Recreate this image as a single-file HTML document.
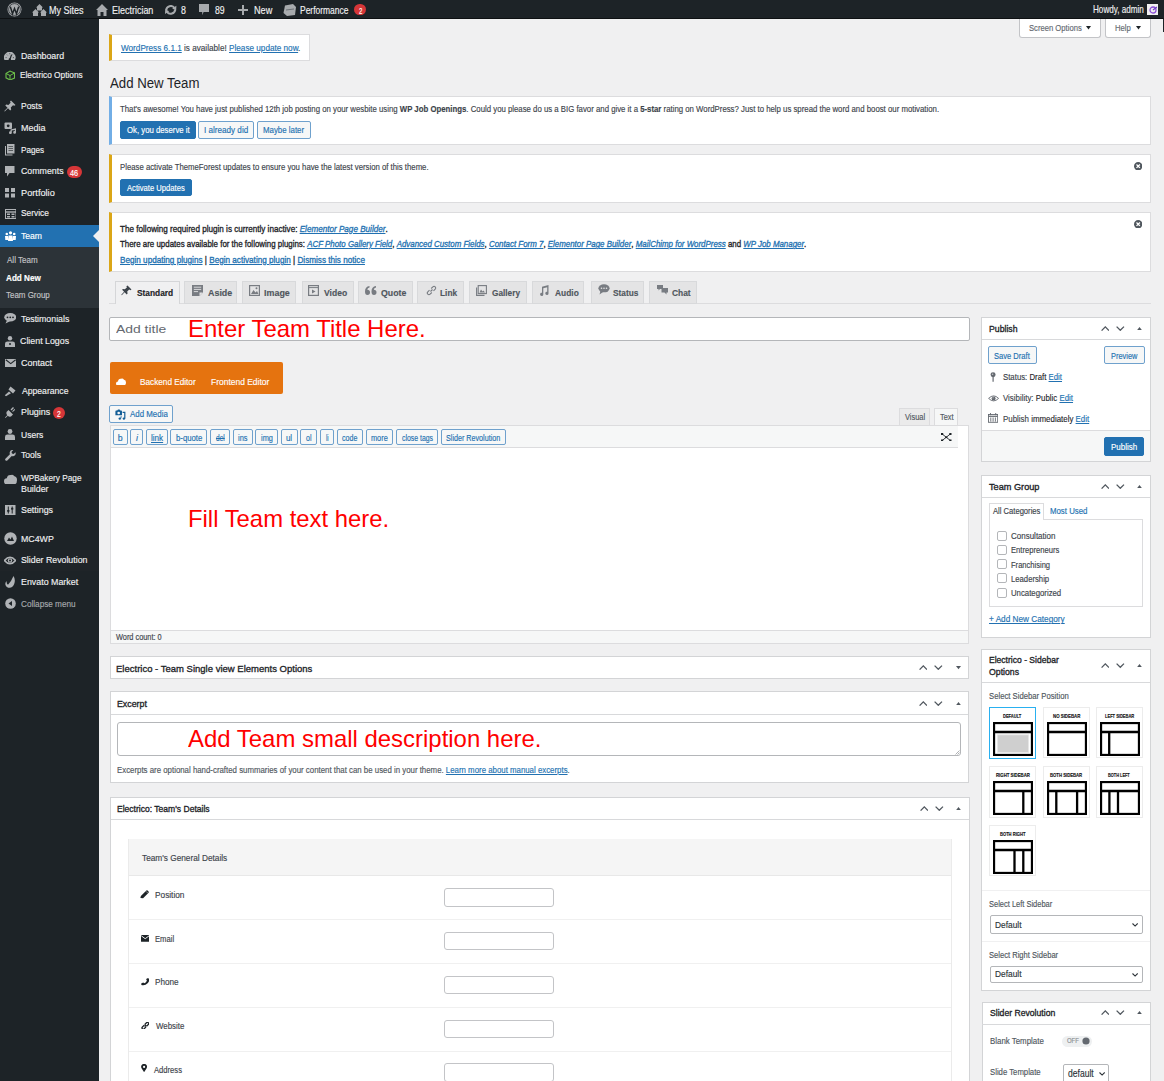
<!DOCTYPE html>
<html><head><meta charset="utf-8"><title>Add New Team</title>
<style>
html,body{margin:0;padding:0;}
body{width:1164px;height:1081px;overflow:hidden;position:relative;background:#f0f0f1;font-family:"Liberation Sans",sans-serif;}
.a{position:absolute;box-sizing:border-box;}
.t{position:absolute;white-space:nowrap;line-height:1;transform-origin:0 0;-webkit-text-stroke:0.15px currentColor;}
.t a,.u{color:#2271b1;text-decoration:underline;}
</style></head><body>
<div class="a" style="left:0px;top:0px;width:1164.00px;height:19.00px;background:#1d2327;"></div>
<div class="a" style="left:0px;top:18.3px;width:1164.00px;height:0.70px;background:#000;opacity:.5;"></div>
<svg class="a" style="left:7.1px;top:1.7px;" width="15" height="15" viewBox="0 0 15 15"><circle cx="7.5" cy="7.5" r="7" fill="#a7aaad"/><circle cx="7.5" cy="7.5" r="5.9" fill="none" stroke="#1d2327" stroke-width="0.7"/><path d="M3.3 4.6 L5.5 11.8 L7.5 6.6 L9.5 11.8 L11.7 4.6" fill="none" stroke="#1d2327" stroke-width="1.5"/></svg>
<svg class="a" style="left:32px;top:3.5px;" width="15" height="12" viewBox="0 0 15 12"><path d="M7.5 0 L11 3.5 L4 3.5 Z M5 3.5 h5 v3 h-5z" fill="#a7aaad"/><path d="M3.5 5 L7 8.5 L0 8.5Z M1 8.5h5v3.5h-5z M11.5 5 L15 8.5 L8 8.5Z M9 8.5h5v3.5h-5z" fill="#a7aaad"/></svg>
<div class="t" id="t0" style="left:49.24px;top:4.89px;font-size:10.64px;color:#f0f0f1;transform:scaleX(0.8500);">My Sites</div>
<svg class="a" style="left:96px;top:3.5px;" width="12" height="12" viewBox="0 0 12 12"><path d="M6 0 L12 6 L10.5 6 L10.5 12 L7.5 12 L7.5 8 L4.5 8 L4.5 12 L1.5 12 L1.5 6 L0 6 Z" fill="#a7aaad"/></svg>
<div class="t" id="t1" style="left:111.63px;top:4.89px;font-size:10.64px;color:#f0f0f1;transform:scaleX(0.8438);">Electrician</div>
<svg class="a" style="left:164.2px;top:4.8px;" width="13.4" height="9.8" viewBox="0 0 13.4 9.8"><path d="M2.2 5.2A4.6 4.6 0 0 1 10.4 2.8" fill="none" stroke="#a7aaad" stroke-width="2"/><path d="M8.2 3.6L12.4 0.8L12.2 5.6Z" fill="#a7aaad"/><path d="M11.2 4.6A4.6 4.6 0 0 1 3 7" fill="none" stroke="#a7aaad" stroke-width="2"/><path d="M5.2 6.2L1 9L1.2 4.2Z" fill="#a7aaad"/></svg>
<div class="t" id="t2" style="left:181.00px;top:4.89px;font-size:10.64px;color:#f0f0f1;transform:scaleX(0.8333);">8</div>
<svg class="a" style="left:198.6px;top:3.8px;" width="10.6" height="11.2" viewBox="0 0 10.6 11.2"><path d="M0 0H10.6V8H4.6L3.2 11.2V8H0Z" fill="#a7aaad"/></svg>
<div class="t" id="t3" style="left:215.47px;top:4.89px;font-size:10.64px;color:#f0f0f1;transform:scaleX(0.8167);">89</div>
<svg class="a" style="left:238px;top:4.5px;" width="10" height="10" viewBox="0 0 10 10"><path d="M4 0h2v4h4v2h-4v4h-2v-4h-4v-2h4z" fill="#a7aaad"/></svg>
<div class="t" id="t4" style="left:253.61px;top:4.89px;font-size:10.64px;color:#f0f0f1;transform:scaleX(0.8571);">New</div>
<svg class="a" style="left:283px;top:3.5px;" width="13" height="12" viewBox="0 0 13 12"><path d="M2 1.5 L10 0 L13 3 L12 11 L4 12 L0.5 9 Z" fill="#a7aaad"/><path d="M3 6 L11 5" stroke="#6b7075" stroke-width="1"/></svg>
<div class="t" id="t5" style="left:300.15px;top:4.89px;font-size:10.64px;color:#f0f0f1;transform:scaleX(0.7968);">Performance</div>
<div class="a" style="left:354px;top:4.3px;width:12.00px;height:10.30px;background:#d63638;border-radius:6px;"></div>
<div class="t" id="t6" style="left:359.16px;top:5.64px;font-size:9.52px;color:#fff;transform:scaleX(0.6286);">2</div>
<div class="t" id="t7" style="left:1093.36px;top:5.37px;font-size:10.08px;color:#f0f0f1;transform:scaleX(0.8065);">Howdy, admin</div>
<div class="a" style="left:1147px;top:4.2px;width:11.00px;height:10.80px;background:#f0f0f1;"></div>
<svg class="a" style="left:1148.5px;top:5.5px;" width="8" height="8" viewBox="0 0 8 8"><circle cx="4" cy="4" r="3" fill="none" stroke="#8a4fd6" stroke-width="1.3"/><path d="M4 4 L8 1" stroke="#6a3fc0" stroke-width="1.2"/></svg>
<div class="a" style="left:1162.9px;top:18.6px;width:1.10px;height:13.20px;background:#1d2327;"></div>
<div class="a" style="left:0px;top:19px;width:99.00px;height:1062.00px;background:#1d2327;"></div>
<div class="a" style="left:0px;top:224.7px;width:99.00px;height:21.90px;background:#2271b1;"></div>
<div class="a" style="left:0px;top:246.6px;width:99.00px;height:61.90px;background:#2c3338;"></div>
<div class="a" style="left:0px;top:549.6px;width:99.00px;height:21.40px;background:#1f2428;"></div>
<svg class="a" style="left:93.3px;top:230px;" width="6" height="12" viewBox="0 0 6 12"><path d="M6 0 L0 6 L6 12Z" fill="#f0f0f1"/></svg>
<div class="t" id="t8" style="left:20.64px;top:51.45px;font-size:9.744px;color:#f0f0f1;transform:scaleX(0.9043);">Dashboard</div>
<div class="t" id="t9" style="left:20.00px;top:69.55px;font-size:9.744px;color:#f0f0f1;transform:scaleX(0.8514);">Electrico Options</div>
<div class="t" id="t10" style="left:21.00px;top:101.05px;font-size:9.744px;color:#f0f0f1;transform:scaleX(0.8667);">Posts</div>
<div class="t" id="t11" style="left:20.59px;top:123.05px;font-size:9.744px;color:#f0f0f1;transform:scaleX(0.9231);">Media</div>
<div class="t" id="t12" style="left:20.76px;top:144.65px;font-size:9.744px;color:#f0f0f1;transform:scaleX(0.8407);">Pages</div>
<div class="t" id="t13" style="left:20.72px;top:166.35px;font-size:9.744px;color:#f0f0f1;transform:scaleX(0.9043);">Comments</div>
<div class="t" id="t14" style="left:20.53px;top:187.65px;font-size:9.744px;color:#f0f0f1;transform:scaleX(0.9457);">Portfolio</div>
<div class="t" id="t15" style="left:21.05px;top:208.45px;font-size:9.744px;color:#f0f0f1;transform:scaleX(0.8594);">Service</div>
<div class="t" id="t16" style="left:21.30px;top:231.45px;font-size:9.744px;color:#fff;transform:scaleX(0.8826);">Team</div>
<div class="t" id="t17" style="left:21.29px;top:314.25px;font-size:9.744px;color:#f0f0f1;transform:scaleX(0.9019);">Testimonials</div>
<div class="t" id="t18" style="left:20.46px;top:336.45px;font-size:9.744px;color:#f0f0f1;transform:scaleX(0.9074);">Client Logos</div>
<div class="t" id="t19" style="left:20.77px;top:357.75px;font-size:9.744px;color:#f0f0f1;transform:scaleX(0.9242);">Contact</div>
<div class="t" id="t20" style="left:21.51px;top:385.95px;font-size:9.744px;color:#f0f0f1;transform:scaleX(0.8849);">Appearance</div>
<div class="t" id="t21" style="left:20.66px;top:407.25px;font-size:9.744px;color:#f0f0f1;transform:scaleX(0.9129);">Plugins</div>
<div class="t" id="t22" style="left:21.05px;top:429.65px;font-size:9.744px;color:#f0f0f1;transform:scaleX(0.8760);">Users</div>
<div class="t" id="t23" style="left:21.40px;top:450.45px;font-size:9.744px;color:#f0f0f1;transform:scaleX(0.8826);">Tools</div>
<div class="t" id="t24" style="left:21.44px;top:472.65px;font-size:9.744px;color:#f0f0f1;transform:scaleX(0.8472);">WPBakery Page</div>
<div class="t" id="t25" style="left:20.63px;top:483.75px;font-size:9.744px;color:#f0f0f1;transform:scaleX(0.9100);">Builder</div>
<div class="t" id="t26" style="left:20.97px;top:504.55px;font-size:9.744px;color:#f0f0f1;transform:scaleX(0.9114);">Settings</div>
<div class="t" id="t27" style="left:20.66px;top:533.75px;font-size:9.744px;color:#f0f0f1;transform:scaleX(0.9057);">MC4WP</div>
<div class="t" id="t28" style="left:20.97px;top:555.05px;font-size:9.744px;color:#f0f0f1;transform:scaleX(0.9027);">Slider Revolution</div>
<div class="t" id="t29" style="left:20.63px;top:577.25px;font-size:9.744px;color:#f0f0f1;transform:scaleX(0.9097);">Envato Market</div>
<div class="t" id="t30" style="left:20.59px;top:599.15px;font-size:9.744px;color:#a7aaad;transform:scaleX(0.8406);">Collapse menu</div>
<div class="t" id="t31" style="left:6.50px;top:255.83px;font-size:9.184px;color:#c3c4c7;transform:scaleX(0.8771);">All Team</div>
<div class="t" id="t32" style="left:5.71px;top:273.63px;font-size:9.184px;color:#fff;font-weight:700;transform:scaleX(0.8872);">Add New</div>
<div class="t" id="t33" style="left:6.48px;top:291.43px;font-size:9.184px;color:#c3c4c7;transform:scaleX(0.8667);">Team Group</div>
<div class="a" style="left:1019px;top:18.6px;width:82.00px;height:19.40px;background:#fff;border:1px solid #c3c4c7;border-top:none;border-radius:0 0 3px 3px;"></div>
<div class="a" style="left:1104.5px;top:18.6px;width:46.50px;height:19.40px;background:#fff;border:1px solid #c3c4c7;border-top:none;border-radius:0 0 3px 3px;"></div>
<div class="t" id="t34" style="left:1029.00px;top:23.92px;font-size:8.96px;color:#646970;transform:scaleX(0.8548);">Screen Options</div>
<svg class="a" style="left:1086px;top:26.3px;" width="5" height="4" viewBox="0 0 5 4"><path d="M0 0H5L2.5 3.5Z" fill="#1d2327"/></svg>
<div class="t" id="t35" style="left:1115.23px;top:23.92px;font-size:8.96px;color:#646970;transform:scaleX(0.8611);">Help</div>
<svg class="a" style="left:1136px;top:26.3px;" width="5" height="4" viewBox="0 0 5 4"><path d="M0 0H5L2.5 3.5Z" fill="#1d2327"/></svg>
<div class="a" style="left:109px;top:34px;width:201.00px;height:27.00px;background:#fff;border:1px solid #dcdcde;border-left:3px solid #dba617;"></div>
<div class="t" id="nag" style="left:121.27px;top:43.82px;font-size:8.96px;color:#3c434a;transform:scaleX(0.9132);"><a>WordPress 6.1.1</a> is available! <a>Please update now</a>.</div>
<div class="t" id="t36" style="left:109.88px;top:75.55px;font-size:14.0px;color:#1d2327;-webkit-text-stroke:0;transform:scaleX(0.9442);">Add New Team</div>
<div class="a" style="left:109px;top:95.7px;width:1042.00px;height:49.10px;background:#fff;border:1px solid #dcdcde;border-left:3px solid #72aee6;"></div>
<div class="t" id="n1" style="left:120.07px;top:104.52px;font-size:8.96px;color:#3c434a;transform:scaleX(0.8709);">That's awesome! You have just published 12th job posting on your wesbite using <b>WP Job Openings</b>. Could you please do us a BIG favor and give it a <b>5-star</b> rating on WordPress? Just to help us spread the word and boost our motivation.</div>
<div class="a" style="left:120.2px;top:120.6px;width:75.60px;height:18.00px;background:#2271b1;border:1px solid #2271b1;border-radius:2px;"></div>
<div class="t" id="t37" style="left:127.00px;top:125.62px;font-size:8.96px;color:#fff;transform:scaleX(0.8681);">Ok, you deserve it</div>
<div class="a" style="left:198px;top:120.6px;width:56.40px;height:18.00px;background:#f6f7f7;border:1px solid #6fa1cd;border-radius:2px;"></div>
<div class="t" id="t38" style="left:204.33px;top:125.62px;font-size:8.96px;color:#2271b1;transform:scaleX(0.9062);">I already did</div>
<div class="a" style="left:256.5px;top:120.6px;width:54.70px;height:18.00px;background:#f6f7f7;border:1px solid #6fa1cd;border-radius:2px;"></div>
<div class="t" id="t39" style="left:262.91px;top:125.62px;font-size:8.96px;color:#2271b1;transform:scaleX(0.8787);">Maybe later</div>
<div class="a" style="left:109px;top:153.5px;width:1042.00px;height:49.20px;background:#fff;border:1px solid #dcdcde;border-left:3px solid #dba617;"></div>
<div class="t" id="n2" style="left:120.49px;top:162.92px;font-size:8.96px;color:#3c434a;transform:scaleX(0.8676);">Please activate ThemeForest updates to ensure you have the latest version of this theme.</div>
<div class="a" style="left:120.2px;top:179px;width:71.80px;height:17.40px;background:#2271b1;border:1px solid #2271b1;border-radius:2px;"></div>
<div class="t" id="t40" style="left:127.43px;top:183.92px;font-size:8.96px;color:#fff;transform:scaleX(0.8529);">Activate Updates</div>
<svg class="a" style="left:1134.0px;top:161.60000000000002px;" width="8.4" height="8.4" viewBox="0 0 8.4 8.4"><circle cx="4.2" cy="4.2" r="4.2" fill="#50575e"/><path d="M2.5 2.5L5.9 5.9M5.9 2.5L2.5 5.9" stroke="#fff" stroke-width="1.3"/></svg>
<div class="a" style="left:109px;top:212.3px;width:1042.00px;height:59.50px;background:#fff;border:1px solid #dcdcde;border-left:3px solid #dba617;"></div>
<div class="t" id="n3a" style="left:120.07px;top:224.52px;font-size:8.96px;color:#1d2327;transform:scaleX(0.9071);-webkit-text-stroke:0.32px currentColor;">The following required plugin is currently inactive: <a><i>Elementor Page Builder</i></a>.</div>
<div class="t" id="n3b" style="left:120.07px;top:240.22px;font-size:8.96px;color:#1d2327;transform:scaleX(0.8828);-webkit-text-stroke:0.32px currentColor;">There are updates available for the following plugins: <a><i>ACF Photo Gallery Field</i></a>, <a><i>Advanced Custom Fields</i></a>, <a><i>Contact Form 7</i></a>, <a><i>Elementor Page Builder</i></a>, <a><i>MailChimp for WordPress</i></a> and <a><i>WP Job Manager</i></a>.</div>
<div class="t" id="n3c" style="left:120.34px;top:255.72px;font-size:8.96px;color:#1d2327;transform:scaleX(0.9108);-webkit-text-stroke:0.32px currentColor;"><a>Begin updating plugins</a> | <a>Begin activating plugin</a> | <a>Dismiss this notice</a></div>
<svg class="a" style="left:1134.0px;top:220.0px;" width="8.4" height="8.4" viewBox="0 0 8.4 8.4"><circle cx="4.2" cy="4.2" r="4.2" fill="#50575e"/><path d="M2.5 2.5L5.9 5.9M5.9 2.5L2.5 5.9" stroke="#fff" stroke-width="1.3"/></svg>
<div class="a" style="left:109.2px;top:303.2px;width:1041.80px;height:1.00px;background:#dcdcde;"></div>
<div class="a" style="left:114.5px;top:281.2px;width:65.20px;height:23.00px;background:#f0f0f1;border:1px solid #d5d6d8;border-bottom:none;"></div>
<div class="a" style="left:184.4px;top:281.2px;width:52.40px;height:22.50px;background:#e4e4e5;border:1px solid #d8d9db;"></div>
<div class="a" style="left:241.5px;top:281.2px;width:54.50px;height:22.50px;background:#e4e4e5;border:1px solid #d8d9db;"></div>
<div class="a" style="left:301.6px;top:281.2px;width:52.00px;height:22.50px;background:#e4e4e5;border:1px solid #d8d9db;"></div>
<div class="a" style="left:358.3px;top:281.2px;width:54.30px;height:22.50px;background:#e4e4e5;border:1px solid #d8d9db;"></div>
<div class="a" style="left:417.3px;top:281.2px;width:46.50px;height:22.50px;background:#e4e4e5;border:1px solid #d8d9db;"></div>
<div class="a" style="left:469.4px;top:281.2px;width:57.20px;height:22.50px;background:#e4e4e5;border:1px solid #d8d9db;"></div>
<div class="a" style="left:532.1px;top:281.2px;width:52.30px;height:22.50px;background:#e4e4e5;border:1px solid #d8d9db;"></div>
<div class="a" style="left:590.7px;top:281.2px;width:53.60px;height:22.50px;background:#e4e4e5;border:1px solid #d8d9db;"></div>
<div class="a" style="left:649.4px;top:281.2px;width:47.40px;height:22.50px;background:#e4e4e5;border:1px solid #d8d9db;"></div>
<svg class="a" style="left:121px;top:285px;" width="11" height="11" viewBox="0 0 11 11"><path d="M6.5 0.5 L10.5 4.5 L9.3 5.2 L8.2 4.5 L6.2 6.6 L6.6 8.6 L5.7 9.4 L3.6 7.3 L0.8 10.2 L0.3 9.7 L3.1 6.8 L1.1 4.8 L1.9 3.9 L3.9 4.3 L6 2.3 L5.3 1.2Z" fill="#3c434a"/></svg>
<div class="t" id="t41" style="left:137.00px;top:289.13px;font-size:9.296px;color:#1d2327;font-weight:700;transform:scaleX(0.9000);">Standard</div>
<svg class="a" style="left:192px;top:284.7px;" width="11" height="11" viewBox="0 0 11 11"><path d="M0 0H11V7.5L7.5 11H0Z" fill="#787c82"/><path d="M1.8 2.2H9.2M1.8 4.4H9.2M1.8 6.6H6" stroke="#e4e4e5" stroke-width="0.9"/><path d="M7.5 11V7.5H11" fill="#e4e4e5"/></svg>
<div class="t" id="t42" style="left:208.00px;top:289.13px;font-size:9.296px;color:#50575e;font-weight:700;transform:scaleX(0.9600);">Aside</div>
<svg class="a" style="left:248.5px;top:285px;" width="11" height="11" viewBox="0 0 11 11"><rect x="0.6" y="0.6" width="9.8" height="9.8" fill="none" stroke="#787c82" stroke-width="1.2"/><path d="M2 9L4.5 5L6.5 7.5L8 6L9.5 9Z" fill="#787c82"/><circle cx="7.5" cy="3.2" r="1" fill="#787c82"/></svg>
<div class="t" id="t43" style="left:264.02px;top:289.13px;font-size:9.296px;color:#50575e;font-weight:700;transform:scaleX(0.9615);">Image</div>
<svg class="a" style="left:308px;top:285px;" width="11" height="11" viewBox="0 0 11 11"><rect x="0.6" y="0.6" width="9.8" height="9.8" fill="none" stroke="#787c82" stroke-width="1.2"/><path d="M0.6 2.6H10.4" stroke="#787c82"/><path d="M4 4.5L7.5 6.5L4 8.5Z" fill="#787c82"/></svg>
<div class="t" id="t44" style="left:324.00px;top:289.13px;font-size:9.296px;color:#50575e;font-weight:700;transform:scaleX(0.9200);">Video</div>
<svg class="a" style="left:365px;top:285.5px;" width="12" height="9" viewBox="0 0 12 9"><path d="M0 5.5 Q0 0.5 4.5 0 L4.5 1.5 Q2.5 2 2.3 3.8 Q5 3.8 5 6.3 Q5 9 2.5 9 Q0 9 0 5.5Z M6.5 5.5 Q6.5 0.5 11 0 L11 1.5 Q9 2 8.8 3.8 Q11.5 3.8 11.5 6.3 Q11.5 9 9 9 Q6.5 9 6.5 5.5Z" fill="#787c82"/></svg>
<div class="t" id="t45" style="left:381.03px;top:289.13px;font-size:9.296px;color:#50575e;font-weight:700;transform:scaleX(0.9423);">Quote</div>
<svg class="a" style="left:425.5px;top:284.5px;" width="11" height="11" viewBox="0 0 11 11"><path d="M4.5 6.5L6.5 4.5M3.5 5.2L1.8 6.9A1.6 1.6 0 0 0 4.1 9.2L5.8 7.5M5.2 3.5L6.9 1.8A1.6 1.6 0 0 1 9.2 4.1L7.5 5.8" fill="none" stroke="#787c82" stroke-width="1.1"/></svg>
<div class="t" id="t46" style="left:440.14px;top:289.13px;font-size:9.296px;color:#50575e;font-weight:700;transform:scaleX(0.8947);">Link</div>
<svg class="a" style="left:476px;top:284.5px;" width="11" height="11" viewBox="0 0 11 11"><rect x="2.2" y="0.6" width="8.2" height="8" fill="none" stroke="#787c82" stroke-width="1.1"/><path d="M0.6 2.5V10.4H8.5" fill="none" stroke="#787c82" stroke-width="1.1"/><path d="M3.5 7.5L5 4.5L6.5 6.5L7.5 5.5L9 7.5Z" fill="#787c82"/></svg>
<div class="t" id="t47" style="left:492.00px;top:289.13px;font-size:9.296px;color:#50575e;font-weight:700;transform:scaleX(0.8906);">Gallery</div>
<svg class="a" style="left:539px;top:284.5px;" width="10" height="11" viewBox="0 0 10 11"><path d="M3 1.8L9.5 0V8.3A1.6 1.6 0 1 1 8.2 6.8V2.2L4.3 3.2V9.3A1.6 1.6 0 1 1 3 7.8Z" fill="#787c82"/></svg>
<div class="t" id="t48" style="left:555.00px;top:289.13px;font-size:9.296px;color:#50575e;font-weight:700;transform:scaleX(0.9038);">Audio</div>
<svg class="a" style="left:597.5px;top:284px;" width="12" height="11" viewBox="0 0 12 11"><ellipse cx="6" cy="4.3" rx="5.6" ry="4" fill="#787c82"/><path d="M2.5 7L1.5 10.5L5 8Z" fill="#787c82"/><circle cx="3.5" cy="4.3" r="0.8" fill="#e5e5e5"/><circle cx="6" cy="4.3" r="0.8" fill="#e5e5e5"/><circle cx="8.5" cy="4.3" r="0.8" fill="#e5e5e5"/></svg>
<div class="t" id="t49" style="left:613.14px;top:289.13px;font-size:9.296px;color:#50575e;font-weight:700;transform:scaleX(0.8929);">Status</div>
<svg class="a" style="left:656.5px;top:284.5px;" width="11" height="10" viewBox="0 0 11 10"><path d="M0 0H6V4H3L1.5 5.5V4H0Z M4.5 3H11V7.5H9.5V9.5L7.5 7.5H4.5Z" fill="#787c82"/></svg>
<div class="t" id="t50" style="left:672.00px;top:289.13px;font-size:9.296px;color:#50575e;font-weight:700;transform:scaleX(0.9048);">Chat</div>
<div class="a" style="left:109px;top:317px;width:860.50px;height:23.60px;background:#fff;border:1px solid #b4b6b9;border-radius:2px;"></div>
<div class="t" id="t51" style="left:116.00px;top:323.61px;font-size:11.8px;color:#646970;-webkit-text-stroke:0;transform:scaleX(1.1786);">Add title</div>
<div class="t" id="t52" style="left:188.46px;top:317.92px;font-size:23.6px;color:#f00;-webkit-text-stroke:0;transform:scaleX(1.0143);">Enter Team Title Here.</div>
<div class="a" style="left:109.6px;top:361.9px;width:173.30px;height:32.30px;background:#e5730f;border-radius:2px;"></div>
<svg class="a" style="left:116.2px;top:377.5px;" width="10" height="7.5" viewBox="0 0 10 7.5"><path d="M2 7.5 Q0 7.5 0 5.5 Q0 3.6 2 3.6 Q2.3 0.5 5 0.8 Q6.8 0 8 1.8 Q10 2 10 4.5 Q10 7.5 7.5 7.5Z" fill="#fff"/></svg>
<div class="t" id="t53" style="left:140.38px;top:377.72px;font-size:8.96px;color:#fff;transform:scaleX(0.9167);">Backend Editor</div>
<div class="t" id="t54" style="left:211.30px;top:377.72px;font-size:8.96px;color:#fff;transform:scaleX(0.9443);">Frontend Editor</div>
<div class="a" style="left:109.4px;top:404.8px;width:63.30px;height:17.90px;background:#f6f7f7;border:1px solid #6fa1cd;border-radius:2px;"></div>
<svg class="a" style="left:115px;top:408.5px;" width="10.5" height="11" viewBox="0 0 10.5 11"><path d="M0.4 2.4Q0.4 1.6 1.2 1.6H2.2L3 0.4H4.6L5.4 1.6H6.2Q7 1.6 7 2.4V6.3H0.4Z" fill="#135e96"/><circle cx="3.7" cy="4" r="1.35" fill="#f6f7f7"/><path d="M7.6 3.4H9.8V9.4" fill="none" stroke="#135e96" stroke-width="1.2"/><circle cx="8.9" cy="9.6" r="1.2" fill="#135e96"/><circle cx="4.8" cy="9.6" r="1.2" fill="#135e96"/><path d="M5.8 9.4L6.2 7.2" stroke="#135e96" stroke-width="0.9"/></svg>
<div class="t" id="t55" style="left:130.24px;top:410.32px;font-size:8.96px;color:#2271b1;transform:scaleX(0.8837);">Add Media</div>
<div class="a" style="left:899.3px;top:408.3px;width:31.20px;height:17.70px;background:#ebebeb;border:1px solid #dcdcde;border-bottom:none;"></div>
<div class="a" style="left:934.1px;top:408.3px;width:24.10px;height:17.70px;background:#f6f7f7;border:1px solid #dcdcde;border-bottom:none;"></div>
<div class="t" id="t56" style="left:905.00px;top:413.00px;font-size:8.736px;color:#50575e;transform:scaleX(0.8542);">Visual</div>
<div class="t" id="t57" style="left:939.74px;top:413.00px;font-size:8.736px;color:#50575e;transform:scaleX(0.8438);">Text</div>
<div class="a" style="left:109.5px;top:425.4px;width:859.50px;height:219.00px;background:#fff;border:1px solid #dcdcde;"></div>
<div class="a" style="left:110.5px;top:426px;width:847.70px;height:22.30px;background:#f6f7f7;border-bottom:1px solid #dcdcde;"></div>
<div class="a" style="left:112.6px;top:429px;width:15.50px;height:15.70px;background:#f6f7f7;border:1px solid #6fa1cd;border-radius:2px;"></div>
<div class="t" id="t58" style="left:117.83px;top:433.50px;font-size:8.736px;color:#2271b1;transform:scaleX(1.0000);">b</div>
<div class="a" style="left:130.3px;top:429px;width:12.90px;height:15.70px;background:#f6f7f7;border:1px solid #6fa1cd;border-radius:2px;"></div>
<div class="t" id="t59" style="left:136.00px;top:433.50px;font-size:8.736px;color:#2271b1;font-style:italic;">i</div>
<div class="a" style="left:145.6px;top:429px;width:22.50px;height:15.70px;background:#f6f7f7;border:1px solid #6fa1cd;border-radius:2px;"></div>
<div class="t" id="t60" style="left:150.62px;top:433.50px;font-size:8.736px;color:#2271b1;transform:scaleX(0.9250);text-decoration:underline;">link</div>
<div class="a" style="left:170.3px;top:429px;width:37.20px;height:15.70px;background:#f6f7f7;border:1px solid #6fa1cd;border-radius:2px;"></div>
<div class="t" id="t61" style="left:176.00px;top:433.50px;font-size:8.736px;color:#2271b1;transform:scaleX(0.8897);">b-quote</div>
<div class="a" style="left:210px;top:429px;width:20.40px;height:15.70px;background:#f6f7f7;border:1px solid #6fa1cd;border-radius:2px;"></div>
<div class="t" id="t62" style="left:215.68px;top:433.50px;font-size:8.736px;color:#2271b1;transform:scaleX(0.7500);text-decoration:line-through;">del</div>
<div class="a" style="left:233px;top:429px;width:19.90px;height:15.70px;background:#f6f7f7;border:1px solid #6fa1cd;border-radius:2px;"></div>
<div class="t" id="t63" style="left:238.10px;top:433.50px;font-size:8.736px;color:#2271b1;transform:scaleX(0.8500);">ins</div>
<div class="a" style="left:255.3px;top:429px;width:23.20px;height:15.70px;background:#f6f7f7;border:1px solid #6fa1cd;border-radius:2px;"></div>
<div class="t" id="t64" style="left:261.00px;top:433.50px;font-size:8.736px;color:#2271b1;transform:scaleX(0.8429);">img</div>
<div class="a" style="left:280.9px;top:429px;width:16.80px;height:15.70px;background:#f6f7f7;border:1px solid #6fa1cd;border-radius:2px;"></div>
<div class="t" id="t65" style="left:286.12px;top:433.50px;font-size:8.736px;color:#2271b1;transform:scaleX(0.9000);">ul</div>
<div class="a" style="left:300.3px;top:429px;width:17.00px;height:15.70px;background:#f6f7f7;border:1px solid #6fa1cd;border-radius:2px;"></div>
<div class="t" id="t66" style="left:306.00px;top:433.50px;font-size:8.736px;color:#2271b1;transform:scaleX(0.8000);">ol</div>
<div class="a" style="left:320px;top:429px;width:14.10px;height:15.70px;background:#f6f7f7;border:1px solid #6fa1cd;border-radius:2px;"></div>
<div class="t" id="t67" style="left:325.77px;top:433.50px;font-size:8.736px;color:#2271b1;transform:scaleX(0.6750);">li</div>
<div class="a" style="left:336.6px;top:429px;width:26.80px;height:15.70px;background:#f6f7f7;border:1px solid #6fa1cd;border-radius:2px;"></div>
<div class="t" id="t68" style="left:342.43px;top:433.50px;font-size:8.736px;color:#2271b1;transform:scaleX(0.8105);">code</div>
<div class="a" style="left:365.9px;top:429px;width:27.40px;height:15.70px;background:#f6f7f7;border:1px solid #6fa1cd;border-radius:2px;"></div>
<div class="t" id="t69" style="left:371.22px;top:433.50px;font-size:8.736px;color:#2271b1;transform:scaleX(0.8421);">more</div>
<div class="a" style="left:396.1px;top:429px;width:42.20px;height:15.70px;background:#f6f7f7;border:1px solid #6fa1cd;border-radius:2px;"></div>
<div class="t" id="t70" style="left:401.66px;top:433.50px;font-size:8.736px;color:#2271b1;transform:scaleX(0.7897);">close tags</div>
<div class="a" style="left:440.9px;top:429px;width:64.90px;height:15.70px;background:#f6f7f7;border:1px solid #6fa1cd;border-radius:2px;"></div>
<div class="t" id="t71" style="left:446.27px;top:433.50px;font-size:8.736px;color:#2271b1;transform:scaleX(0.8231);">Slider Revolution</div>
<svg class="a" style="left:941.4px;top:432.8px;" width="10.5" height="8.5" viewBox="0 0 10.5 8.5"><path d="M1.2 1L9.3 7.5M9.3 1L1.2 7.5" stroke="#1d2327" stroke-width="0.9"/><rect x="0" y="0" width="2.2" height="2" fill="#1d2327"/><rect x="8.3" y="0" width="2.2" height="2" fill="#1d2327"/><rect x="0" y="6.5" width="2.2" height="2" fill="#1d2327"/><rect x="8.3" y="6.5" width="2.2" height="2" fill="#1d2327"/><rect x="4.2" y="3.4" width="2.1" height="1.7" fill="#1d2327"/></svg>
<div class="t" id="t72" style="left:188.31px;top:507.92px;font-size:23.6px;color:#f00;-webkit-text-stroke:0;transform:scaleX(1.0112);">Fill Team text here.</div>
<div class="a" style="left:110.5px;top:630px;width:857.50px;height:13.40px;background:#f6f7f7;border-top:1px solid #dcdcde;"></div>
<div class="t" id="t73" style="left:116.00px;top:633.49px;font-size:8.4px;color:#3c434a;transform:scaleX(0.8769);">Word count: 0</div>
<div class="a" style="left:109.5px;top:656.2px;width:859.50px;height:23.20px;background:#fff;border:1px solid #d3d4d6;"></div>
<div class="t" id="t74" style="left:116.00px;top:664.26px;font-size:9.856px;color:#1d2327;transform:scaleX(0.9655);-webkit-text-stroke:0.32px currentColor;">Electrico - Team Single view Elements Options</div>
<svg class="a" style="left:918.9px;top:665.1999999999999px;" width="8.6" height="5.2" viewBox="0 0 8.6 5.2"><path d="M0.6 4.6L4.3 0.9L8 4.6" fill="none" stroke="#50575e" stroke-width="1.3"/></svg>
<svg class="a" style="left:934.4px;top:665.1999999999999px;" width="8.6" height="5.2" viewBox="0 0 8.6 5.2"><path d="M0.6 0.6L4.3 4.3L8 0.6" fill="none" stroke="#50575e" stroke-width="1.3"/></svg>
<svg class="a" style="left:955.6px;top:666.4px;" width="5" height="3.2" viewBox="0 0 5 3.2"><path d="M0 0H5L2.5 3.2Z" fill="#50575e"/></svg>
<div class="a" style="left:109.5px;top:691.3px;width:859.50px;height:92.00px;background:#fff;border:1px solid #d3d4d6;"></div>
<div class="a" style="left:110.5px;top:714.0px;width:857.50px;height:1.00px;background:#d8d9db;"></div>
<div class="t" id="t75" style="left:117.01px;top:699.52px;font-size:8.96px;color:#1d2327;transform:scaleX(0.9833);-webkit-text-stroke:0.32px currentColor;">Excerpt</div>
<svg class="a" style="left:918.9px;top:700.6999999999999px;" width="8.6" height="5.2" viewBox="0 0 8.6 5.2"><path d="M0.6 4.6L4.3 0.9L8 4.6" fill="none" stroke="#50575e" stroke-width="1.3"/></svg>
<svg class="a" style="left:934.4px;top:700.6999999999999px;" width="8.6" height="5.2" viewBox="0 0 8.6 5.2"><path d="M0.6 0.6L4.3 4.3L8 0.6" fill="none" stroke="#50575e" stroke-width="1.3"/></svg>
<svg class="a" style="left:955.6px;top:701.5px;" width="5" height="3.2" viewBox="0 0 5 3.2"><path d="M0 3.2H5L2.5 0Z" fill="#50575e"/></svg>
<div class="a" style="left:117.2px;top:722.2px;width:843.80px;height:33.40px;background:#fff;border:1px solid #b4b6b9;border-radius:3px;"></div>
<svg class="a" style="left:955px;top:749.5px;" width="5" height="5" viewBox="0 0 5 5"><path d="M0.5 4.5L4.5 0.5M2.5 4.5L4.5 2.5" stroke="#8c8f94" stroke-width="0.7"/></svg>
<div class="t" id="t76" style="left:187.97px;top:727.92px;font-size:23.6px;color:#f00;-webkit-text-stroke:0;transform:scaleX(1.0144);">Add Team small description here.</div>
<div class="t" id="exh" style="left:117.00px;top:765.89px;font-size:8.4px;color:#50575e;transform:scaleX(0.9369);">Excerpts are optional hand-crafted summaries of your content that can be used in your theme. <a>Learn more about manual excerpts</a>.</div>
<div class="a" style="left:109.5px;top:797.2px;width:860.50px;height:287.80px;background:#fff;border:1px solid #d3d4d6;"></div>
<div class="a" style="left:110.5px;top:819.0px;width:858.50px;height:1.00px;background:#d8d9db;"></div>
<div class="t" id="t77" style="left:117.00px;top:805.02px;font-size:8.96px;color:#1d2327;transform:scaleX(0.9536);-webkit-text-stroke:0.32px currentColor;">Electrico: Team's Details</div>
<svg class="a" style="left:919.5px;top:806.3px;" width="8.6" height="5.2" viewBox="0 0 8.6 5.2"><path d="M0.6 4.6L4.3 0.9L8 4.6" fill="none" stroke="#50575e" stroke-width="1.3"/></svg>
<svg class="a" style="left:935px;top:806.3px;" width="8.6" height="5.2" viewBox="0 0 8.6 5.2"><path d="M0.6 0.6L4.3 4.3L8 0.6" fill="none" stroke="#50575e" stroke-width="1.3"/></svg>
<svg class="a" style="left:956px;top:807.1px;" width="5" height="3.2" viewBox="0 0 5 3.2"><path d="M0 3.2H5L2.5 0Z" fill="#50575e"/></svg>
<div class="a" style="left:128.1px;top:838.9px;width:823.50px;height:246.10px;background:#fff;border:1px solid #ebebeb;"></div>
<div class="a" style="left:128.6px;top:839.4px;width:822.50px;height:36.20px;background:#f5f5f5;border-bottom:1px solid #e8e8e8;"></div>
<div class="t" id="t78" style="left:141.58px;top:854.42px;font-size:8.96px;color:#3c434a;transform:scaleX(0.9237);">Team's General Details</div>
<div class="a" style="left:444.4px;top:888.1px;width:109.30px;height:18.60px;background:#fff;border:1px solid #c3c4c7;border-radius:3px;"></div>
<div class="a" style="left:128.6px;top:919.4px;width:822.50px;height:1.00px;background:#f0f0f0;"></div>
<div class="a" style="left:444.4px;top:931.9px;width:109.30px;height:18.60px;background:#fff;border:1px solid #c3c4c7;border-radius:3px;"></div>
<div class="a" style="left:128.6px;top:963.1999999999999px;width:822.50px;height:1.00px;background:#f0f0f0;"></div>
<div class="a" style="left:444.4px;top:975.7px;width:109.30px;height:18.60px;background:#fff;border:1px solid #c3c4c7;border-radius:3px;"></div>
<div class="a" style="left:128.6px;top:1007.0px;width:822.50px;height:1.00px;background:#f0f0f0;"></div>
<div class="a" style="left:444.4px;top:1019.5px;width:109.30px;height:18.60px;background:#fff;border:1px solid #c3c4c7;border-radius:3px;"></div>
<div class="a" style="left:128.6px;top:1050.8px;width:822.50px;height:1.00px;background:#f0f0f0;"></div>
<div class="a" style="left:444.4px;top:1063.3px;width:109.30px;height:18.60px;background:#fff;border:1px solid #c3c4c7;border-radius:3px;"></div>
<div class="t" id="t79" style="left:155.29px;top:890.70px;font-size:8.736px;color:#3c434a;transform:scaleX(0.9500);">Position</div>
<div class="t" id="t80" style="left:155.43px;top:934.50px;font-size:8.736px;color:#3c434a;transform:scaleX(0.8810);">Email</div>
<div class="t" id="t81" style="left:155.39px;top:978.30px;font-size:8.736px;color:#3c434a;transform:scaleX(0.9375);">Phone</div>
<div class="t" id="t82" style="left:156.13px;top:1022.10px;font-size:8.736px;color:#3c434a;transform:scaleX(0.9032);">Website</div>
<div class="t" id="t83" style="left:153.80px;top:1065.90px;font-size:8.736px;color:#3c434a;transform:scaleX(0.8750);">Address</div>
<svg class="a" style="left:140.4px;top:890.3px;" width="9.2" height="8.4" viewBox="0 0 9.2 8.4"><path d="M0.4 8.1L0.9 6L6.4 0.6Q7 0.1 7.6 0.6L8.6 1.6Q9.1 2.2 8.6 2.8L3.1 8.2Z" fill="#1d2327"/><path d="M6 1.3L7.9 3.2" stroke="#fff" stroke-width="0.5"/></svg>
<svg class="a" style="left:140.8px;top:934.8px;" width="8.4" height="6.8" viewBox="0 0 8.4 6.8"><rect x="0" y="0" width="8.4" height="6.8" rx="0.6" fill="#1d2327"/><path d="M0.3 0.8L4.2 3.7L8.1 0.8" fill="none" stroke="#fff" stroke-width="0.9"/></svg>
<svg class="a" style="left:140.8px;top:978.2px;" width="8.4" height="7.4" viewBox="0 0 8.4 7.4"><path d="M6.2 0.2L8.2 0.6L8.3 1.8Q8 5.2 4.6 6.8Q2.4 7.6 0.4 6.9L0.2 5.6L2.2 4.6L3.4 5.3Q5.3 4.4 5.9 2.4L5.1 1.3Z" fill="#1d2327"/></svg>
<svg class="a" style="left:140.8px;top:1021.5px;" width="8.4" height="7.5" viewBox="0 0 8.4 7.5"><path d="M3.7 4.6L5.1 3.0M3.3 3.1L1.4 5.0A1.25 1.25 0 0 0 3.2 6.8L5.0 4.9M5.5 4.4L7.3 2.5A1.25 1.25 0 0 0 5.5 0.7L3.6 2.6" fill="none" stroke="#1d2327" stroke-width="1.3"/></svg>
<svg class="a" style="left:141.3px;top:1064.1px;" width="6.2" height="8.3" viewBox="0 0 6.2 8.3"><path d="M3.1 8.2L0.7 4.4A2.9 2.9 0 1 1 5.5 4.4Z" fill="#1d2327"/><circle cx="3.1" cy="2.9" r="1.1" fill="#fff"/></svg>
<div class="a" style="left:981px;top:317.3px;width:169.60px;height:145.00px;background:#fff;border:1px solid #d3d4d6;"></div>
<div class="a" style="left:982px;top:339.1px;width:167.60px;height:1.00px;background:#d8d9db;"></div>
<div class="t" id="t84" style="left:988.50px;top:324.72px;font-size:8.96px;color:#1d2327;transform:scaleX(0.9714);-webkit-text-stroke:0.32px currentColor;">Publish</div>
<svg class="a" style="left:1100.8px;top:326.09999999999997px;" width="8.6" height="5.2" viewBox="0 0 8.6 5.2"><path d="M0.6 4.6L4.3 0.9L8 4.6" fill="none" stroke="#50575e" stroke-width="1.3"/></svg>
<svg class="a" style="left:1116.2px;top:326.09999999999997px;" width="8.6" height="5.2" viewBox="0 0 8.6 5.2"><path d="M0.6 0.6L4.3 4.3L8 0.6" fill="none" stroke="#50575e" stroke-width="1.3"/></svg>
<svg class="a" style="left:1137.3px;top:326.9px;" width="5" height="3.2" viewBox="0 0 5 3.2"><path d="M0 3.2H5L2.5 0Z" fill="#50575e"/></svg>
<div class="a" style="left:987.7px;top:346px;width:49.20px;height:18.40px;background:#f6f7f7;border:1px solid #6fa1cd;border-radius:2px;"></div>
<div class="t" id="t85" style="left:994.29px;top:351.82px;font-size:8.96px;color:#2271b1;transform:scaleX(0.8452);">Save Draft</div>
<div class="a" style="left:1104px;top:346px;width:40.60px;height:18.40px;background:#f6f7f7;border:1px solid #6fa1cd;border-radius:2px;"></div>
<div class="t" id="t86" style="left:1111.00px;top:351.82px;font-size:8.96px;color:#2271b1;transform:scaleX(0.8281);">Preview</div>
<svg class="a" style="left:990px;top:372.2px;" width="6.4" height="10" viewBox="0 0 6.4 10"><circle cx="3.1" cy="2.8" r="2.5" fill="#646970"/><circle cx="2.6" cy="2.3" r="0.8" fill="#c3c4c7"/><path d="M3.1 5V9.7" stroke="#646970" stroke-width="1.2"/></svg>
<div class="t" id="st" style="left:1002.64px;top:373.42px;font-size:8.96px;color:#3c434a;transform:scaleX(0.8716);">Status: <b style="font-weight:400;color:#1d2327;-webkit-text-stroke:0.12px currentColor">Draft</b> <a>Edit</a></div>
<svg class="a" style="left:987.8px;top:395.2px;" width="11.2" height="6.8" viewBox="0 0 11.2 6.8"><path d="M0.6 3.4Q5.6 -1.6 10.6 3.4Q5.6 8.4 0.6 3.4Z" fill="none" stroke="#646970" stroke-width="0.9"/><circle cx="5.6" cy="3.4" r="2" fill="#646970"/><circle cx="5" cy="2.8" r="0.6" fill="#c3c4c7"/></svg>
<div class="t" id="vis" style="left:1003.07px;top:394.22px;font-size:8.96px;color:#3c434a;transform:scaleX(0.8810);">Visibility: <b style="font-weight:400;color:#1d2327;-webkit-text-stroke:0.12px currentColor">Public</b> <a>Edit</a></div>
<svg class="a" style="left:988.3px;top:413.4px;" width="10.2" height="9.8" viewBox="0 0 10.2 9.8"><rect x="0.5" y="1.5" width="9.2" height="7.8" fill="none" stroke="#646970" stroke-width="0.9"/><path d="M0.5 3.3H9.7" stroke="#646970" stroke-width="1.2"/><path d="M2.8 4.5V8.6M5.1 4.5V8.6M7.4 4.5V8.6M2.5 0V2.2M7.7 0V2.2" stroke="#646970" stroke-width="0.9"/></svg>
<div class="t" id="pim" style="left:1003.47px;top:414.52px;font-size:8.96px;color:#3c434a;transform:scaleX(0.8837);">Publish <b style="font-weight:400;color:#1d2327;-webkit-text-stroke:0.12px currentColor">immediately</b> <a>Edit</a></div>
<div class="a" style="left:982px;top:430.1px;width:167.60px;height:31.20px;background:#f6f7f7;border-top:1px solid #dcdcde;"></div>
<div class="a" style="left:1103.7px;top:436.6px;width:40.10px;height:19.00px;background:#2271b1;border:1px solid #2271b1;border-radius:2px;"></div>
<div class="t" id="t87" style="left:1111.00px;top:442.62px;font-size:8.96px;color:#fff;transform:scaleX(0.8966);">Publish</div>
<div class="a" style="left:981px;top:474.9px;width:169.60px;height:163.10px;background:#fff;border:1px solid #d3d4d6;"></div>
<div class="a" style="left:982px;top:497px;width:167.60px;height:1.00px;background:#d8d9db;"></div>
<div class="t" id="t88" style="left:989.38px;top:482.52px;font-size:8.96px;color:#1d2327;transform:scaleX(1.0245);-webkit-text-stroke:0.32px currentColor;">Team Group</div>
<svg class="a" style="left:1100.8px;top:483.7px;" width="8.6" height="5.2" viewBox="0 0 8.6 5.2"><path d="M0.6 4.6L4.3 0.9L8 4.6" fill="none" stroke="#50575e" stroke-width="1.3"/></svg>
<svg class="a" style="left:1116.2px;top:483.7px;" width="8.6" height="5.2" viewBox="0 0 8.6 5.2"><path d="M0.6 0.6L4.3 4.3L8 0.6" fill="none" stroke="#50575e" stroke-width="1.3"/></svg>
<svg class="a" style="left:1137.3px;top:484.5px;" width="5" height="3.2" viewBox="0 0 5 3.2"><path d="M0 3.2H5L2.5 0Z" fill="#50575e"/></svg>
<div class="a" style="left:989.3px;top:519.3px;width:153.40px;height:87.90px;background:#fff;border:1px solid #dcdcde;"></div>
<div class="a" style="left:989.3px;top:502.5px;width:54.70px;height:17.80px;background:#fff;border:1px solid #dcdcde;border-bottom:none;"></div>
<div class="t" id="t89" style="left:992.80px;top:507.00px;font-size:8.736px;color:#3c434a;transform:scaleX(0.8727);">All Categories</div>
<div class="t" id="t90" style="left:1050.14px;top:507.00px;font-size:8.736px;color:#2271b1;transform:scaleX(0.8976);">Most Used</div>
<div class="a" style="left:996.6px;top:530.7px;width:10.10px;height:10.00px;background:#fff;border:1px solid #b4b6b9;border-radius:2px;"></div>
<div class="t" id="t91" style="left:1011.00px;top:532.20px;font-size:8.736px;color:#3c434a;transform:scaleX(0.9167);">Consultation</div>
<div class="a" style="left:996.6px;top:544.9200000000001px;width:10.10px;height:10.00px;background:#fff;border:1px solid #b4b6b9;border-radius:2px;"></div>
<div class="t" id="t92" style="left:1011.00px;top:546.42px;font-size:8.736px;color:#3c434a;transform:scaleX(0.8727);">Entrepreneurs</div>
<div class="a" style="left:996.6px;top:559.1400000000001px;width:10.10px;height:10.00px;background:#fff;border:1px solid #b4b6b9;border-radius:2px;"></div>
<div class="t" id="t93" style="left:1011.00px;top:560.64px;font-size:8.736px;color:#3c434a;transform:scaleX(0.8667);">Franchising</div>
<div class="a" style="left:996.6px;top:573.36px;width:10.10px;height:10.00px;background:#fff;border:1px solid #b4b6b9;border-radius:2px;"></div>
<div class="t" id="t94" style="left:1011.00px;top:574.86px;font-size:8.736px;color:#3c434a;transform:scaleX(0.8837);">Leadership</div>
<div class="a" style="left:996.6px;top:587.58px;width:10.10px;height:10.00px;background:#fff;border:1px solid #b4b6b9;border-radius:2px;"></div>
<div class="t" id="t95" style="left:1011.00px;top:589.08px;font-size:8.736px;color:#3c434a;transform:scaleX(0.8929);">Uncategorized</div>
<div class="t" id="t96" style="left:988.53px;top:615.30px;font-size:8.736px;color:#2271b1;transform:scaleX(0.9437);text-decoration:underline;">+ Add New Category</div>
<div class="a" style="left:981px;top:648.9px;width:169.60px;height:342.30px;background:#fff;border:1px solid #d3d4d6;"></div>
<div class="a" style="left:982px;top:682.2px;width:167.60px;height:1.00px;background:#d8d9db;"></div>
<div class="t" id="t97" style="left:988.52px;top:656.02px;font-size:8.96px;color:#1d2327;transform:scaleX(0.9542);-webkit-text-stroke:0.32px currentColor;">Electrico - Sidebar</div>
<div class="t" id="t98" style="left:989.36px;top:668.22px;font-size:8.96px;color:#1d2327;transform:scaleX(0.9742);-webkit-text-stroke:0.32px currentColor;">Options</div>
<svg class="a" style="left:1100.8px;top:663.4px;" width="8.6" height="5.2" viewBox="0 0 8.6 5.2"><path d="M0.6 4.6L4.3 0.9L8 4.6" fill="none" stroke="#50575e" stroke-width="1.3"/></svg>
<svg class="a" style="left:1116.2px;top:663.4px;" width="8.6" height="5.2" viewBox="0 0 8.6 5.2"><path d="M0.6 0.6L4.3 4.3L8 0.6" fill="none" stroke="#50575e" stroke-width="1.3"/></svg>
<svg class="a" style="left:1137.3px;top:664.2px;" width="5" height="3.2" viewBox="0 0 5 3.2"><path d="M0 3.2H5L2.5 0Z" fill="#50575e"/></svg>
<div class="t" id="t99" style="left:988.68px;top:691.90px;font-size:8.736px;color:#50575e;transform:scaleX(0.8843);">Select Sidebar Position</div>
<div class="a" style="left:989.3px;top:707.0px;width:47.00px;height:52.30px;background:#fff;border:1.5px solid #29b0f0;"></div>
<svg class="a" style="left:992.9px;top:722.0px;" width="40" height="34" viewBox="0 0 40 34"><rect x="1" y="1" width="38" height="32" fill="none" stroke="#000" stroke-width="2.3"/><path d="M1 10H39" stroke="#000" stroke-width="2.3"/><rect x="4.3" y="12.8" width="31.4" height="17.6" fill="#cfcfcf" stroke="#e8e8e8" stroke-width="0.8"/></svg>
<div class="t" id="t100" style="left:1003.37px;top:714.17px;font-size:5.824px;color:#111;font-weight:700;transform:scaleX(0.6923);">DEFAULT</div>
<div class="a" style="left:1042.9px;top:707.0px;width:47.00px;height:51.40px;background:#fff;border:1px solid #ececec;"></div>
<svg class="a" style="left:1046.5px;top:722.0px;" width="40" height="34" viewBox="0 0 40 34"><rect x="1" y="1" width="38" height="32" fill="none" stroke="#000" stroke-width="2.3"/><path d="M1 10H39" stroke="#000" stroke-width="2.3"/></svg>
<div class="t" id="t101" style="left:1052.62px;top:714.17px;font-size:5.824px;color:#111;font-weight:700;transform:scaleX(0.7500);">NO SIDEBAR</div>
<div class="a" style="left:1096.0px;top:707.0px;width:47.00px;height:51.40px;background:#fff;border:1px solid #ececec;"></div>
<svg class="a" style="left:1099.6px;top:722.0px;" width="40" height="34" viewBox="0 0 40 34"><rect x="1" y="1" width="38" height="32" fill="none" stroke="#000" stroke-width="2.3"/><path d="M1 10H39" stroke="#000" stroke-width="2.3"/><path d="M9.2 10V33" stroke="#000" stroke-width="2.3"/></svg>
<div class="t" id="t102" style="left:1105.00px;top:714.17px;font-size:5.824px;color:#111;font-weight:700;transform:scaleX(0.6905);">LEFT SIDEBAR</div>
<div class="a" style="left:989.3px;top:766.2px;width:47.00px;height:51.40px;background:#fff;border:1px solid #ececec;"></div>
<svg class="a" style="left:992.9px;top:781.2px;" width="40" height="34" viewBox="0 0 40 34"><rect x="1" y="1" width="38" height="32" fill="none" stroke="#000" stroke-width="2.3"/><path d="M1 10H39" stroke="#000" stroke-width="2.3"/><path d="M30.3 10V33" stroke="#000" stroke-width="2.3"/></svg>
<div class="t" id="t103" style="left:995.68px;top:773.37px;font-size:5.824px;color:#111;font-weight:700;transform:scaleX(0.7391);">RIGHT SIDEBAR</div>
<div class="a" style="left:1042.9px;top:766.2px;width:47.00px;height:51.40px;background:#fff;border:1px solid #ececec;"></div>
<svg class="a" style="left:1046.5px;top:781.2px;" width="40" height="34" viewBox="0 0 40 34"><rect x="1" y="1" width="38" height="32" fill="none" stroke="#000" stroke-width="2.3"/><path d="M1 10H39" stroke="#000" stroke-width="2.3"/><path d="M9.3 10V33M30.1 10V33" stroke="#000" stroke-width="2.3"/></svg>
<div class="t" id="t104" style="left:1050.42px;top:773.37px;font-size:5.824px;color:#111;font-weight:700;transform:scaleX(0.7273);">BOTH SIDEBAR</div>
<div class="a" style="left:1096.0px;top:766.2px;width:47.00px;height:51.40px;background:#fff;border:1px solid #ececec;"></div>
<svg class="a" style="left:1099.6px;top:781.2px;" width="40" height="34" viewBox="0 0 40 34"><rect x="1" y="1" width="38" height="32" fill="none" stroke="#000" stroke-width="2.3"/><path d="M1 10H39" stroke="#000" stroke-width="2.3"/><path d="M9.4 10V33M18 10V33" stroke="#000" stroke-width="2.3"/></svg>
<div class="t" id="t105" style="left:1108.27px;top:773.37px;font-size:5.824px;color:#111;font-weight:700;transform:scaleX(0.6667);">BOTH LEFT</div>
<div class="a" style="left:989.3px;top:824.6px;width:47.00px;height:51.40px;background:#fff;border:1px solid #ececec;"></div>
<svg class="a" style="left:992.9px;top:839.6px;" width="40" height="34" viewBox="0 0 40 34"><rect x="1" y="1" width="38" height="32" fill="none" stroke="#000" stroke-width="2.3"/><path d="M1 10H39" stroke="#000" stroke-width="2.3"/><path d="M21.5 10V33M30.3 10V33" stroke="#000" stroke-width="2.3"/></svg>
<div class="t" id="t106" style="left:999.83px;top:831.77px;font-size:5.824px;color:#111;font-weight:700;transform:scaleX(0.7027);">BOTH RIGHT</div>
<div class="a" style="left:982px;top:890.1px;width:167.60px;height:1.00px;background:#f0f0f1;"></div>
<div class="t" id="t107" style="left:988.72px;top:899.80px;font-size:8.736px;color:#50575e;transform:scaleX(0.8589);">Select Left Sidebar</div>
<div class="a" style="left:990.1px;top:915.4px;width:152.90px;height:18.20px;background:#fff;border:1px solid #b4b6b9;border-radius:2px;"></div>
<div class="t" id="t108" style="left:995.06px;top:920.53px;font-size:9.184px;color:#2c3338;transform:scaleX(0.9103);">Default</div>
<svg class="a" style="left:1131.7px;top:922.5px;" width="6.2" height="4" viewBox="0 0 6.2 4"><path d="M0.5 0.5L3.1 3.1L5.7 0.5" fill="none" stroke="#2c3338" stroke-width="1.1"/></svg>
<div class="a" style="left:982px;top:940.9px;width:167.60px;height:1.00px;background:#f0f0f1;"></div>
<div class="t" id="t109" style="left:988.69px;top:950.60px;font-size:8.736px;color:#50575e;transform:scaleX(0.8696);">Select Right Sidebar</div>
<div class="a" style="left:990.1px;top:965.6px;width:152.90px;height:17.80px;background:#fff;border:1px solid #b4b6b9;border-radius:2px;"></div>
<div class="t" id="t110" style="left:995.06px;top:970.43px;font-size:9.184px;color:#2c3338;transform:scaleX(0.9103);">Default</div>
<svg class="a" style="left:1131.7px;top:972.5px;" width="6.2" height="4" viewBox="0 0 6.2 4"><path d="M0.5 0.5L3.1 3.1L5.7 0.5" fill="none" stroke="#2c3338" stroke-width="1.1"/></svg>
<div class="a" style="left:982px;top:1001.5px;width:168.60px;height:88.50px;background:#fff;border:1px solid #d3d4d6;"></div>
<div class="a" style="left:982px;top:1023.8px;width:167.60px;height:1.00px;background:#d8d9db;"></div>
<div class="t" id="t111" style="left:990.23px;top:1009.12px;font-size:8.96px;color:#1d2327;transform:scaleX(0.9642);-webkit-text-stroke:0.32px currentColor;">Slider Revolution</div>
<svg class="a" style="left:1100.8px;top:1010.1px;" width="8.6" height="5.2" viewBox="0 0 8.6 5.2"><path d="M0.6 4.6L4.3 0.9L8 4.6" fill="none" stroke="#50575e" stroke-width="1.3"/></svg>
<svg class="a" style="left:1116.2px;top:1010.1px;" width="8.6" height="5.2" viewBox="0 0 8.6 5.2"><path d="M0.6 0.6L4.3 4.3L8 0.6" fill="none" stroke="#50575e" stroke-width="1.3"/></svg>
<svg class="a" style="left:1137.3px;top:1010.9000000000001px;" width="5" height="3.2" viewBox="0 0 5 3.2"><path d="M0 3.2H5L2.5 0Z" fill="#50575e"/></svg>
<div class="t" id="t112" style="left:990.41px;top:1036.90px;font-size:8.736px;color:#50575e;transform:scaleX(0.9051);">Blank Template</div>
<div class="a" style="left:1062.3px;top:1035.6px;width:29.60px;height:11.40px;background:#eef0f1;border-radius:6px;"></div>
<div class="t" id="t113" style="left:1066.57px;top:1038.41px;font-size:6.72px;color:#8c8f94;transform:scaleX(0.8846);">OFF</div>
<svg class="a" style="left:1081.5px;top:1037.3px;" width="8" height="8" viewBox="0 0 8 8"><circle cx="4" cy="4" r="3.6" fill="#646970"/></svg>
<div class="t" id="t114" style="left:990.44px;top:1068.00px;font-size:8.736px;color:#50575e;transform:scaleX(0.8877);">Slide Template</div>
<div class="a" style="left:1063.1px;top:1063.5px;width:46.30px;height:21.50px;background:#fff;border:1px solid #b4b6b9;border-radius:2px;"></div>
<div class="t" id="t115" style="left:1068.15px;top:1068.87px;font-size:10.08px;color:#2c3338;transform:scaleX(0.8500);">default</div>
<svg class="a" style="left:1098.5px;top:1071.5px;" width="6.2" height="4" viewBox="0 0 6.2 4"><path d="M0.5 0.5L3.1 3.1L5.7 0.5" fill="none" stroke="#2c3338" stroke-width="1.1"/></svg>
<svg class="a" style="left:4.4px;top:51.5px;" width="11.5" height="8.6" viewBox="0 0 11.5 8.6"><path d="M0.9 8.6A5.75 5.75 0 1 1 10.6 8.6Z" fill="#b0b3b6"/><path d="M5.75 7.8L7.6 2.6" stroke="#1d2327" stroke-width="1.2"/><circle cx="5.75" cy="7.3" r="1.1" fill="#1d2327"/><path d="M1.6 5.6h1M2.9 2.6l.7.7M5.75 1.2v1M8.6 2.6l-.7.7M9.9 5.6h-1" stroke="#1d2327" stroke-width="0.7"/></svg>
<svg class="a" style="left:4.5px;top:69.5px;" width="10.5" height="10.5" viewBox="0 0 10.5 10.5"><path d="M1 3.5L5 1L9.5 3V8L5 10L1 7.8Z" fill="none" stroke="#6cc04a" stroke-width="1.1"/><path d="M1 3.5L5 5.5L9.5 3M5 5.5V10" fill="none" stroke="#6cc04a" stroke-width="1"/></svg>
<svg class="a" style="left:4px;top:100px;" width="12" height="12" viewBox="0 0 12 12"><path d="M7 0.5L11.5 5L10.3 5.8L9 5.2L6.8 7.4L7.2 9.6L6.2 10.5L4 8.2L0.8 11.5L0.3 11L3.5 7.7L1.3 5.5L2.2 4.5L4.4 4.9L6.6 2.7L6 1.4Z" fill="#b0b3b6"/></svg>
<svg class="a" style="left:4px;top:122.3px;" width="12.5" height="11.5" viewBox="0 0 12.5 11.5"><rect x="0.5" y="0.5" width="7.5" height="6.5" rx="1" fill="#b0b3b6"/><circle cx="4.2" cy="3.8" r="1.4" fill="#1d2327"/><path d="M6.5 7.5L12 6.2V10.2A1.4 1.4 0 1 1 10.8 9V8L7.8 8.6V10.5A1.4 1.4 0 1 1 6.5 9.3Z" fill="#b0b3b6"/></svg>
<svg class="a" style="left:5px;top:144px;" width="9.5" height="11.5" viewBox="0 0 9.5 11.5"><path d="M2 0H9.5V9.5H2Z" fill="#b0b3b6"/><path d="M0 2V11.5H7.5V10.5H1V2Z" fill="#b0b3b6"/><path d="M3.5 2.5H8M3.5 4.5H8M3.5 6.5H8" stroke="#1d2327" stroke-width="0.6"/></svg>
<svg class="a" style="left:5px;top:166px;" width="9.5" height="10.5" viewBox="0 0 9.5 10.5"><path d="M0 0H9.5V7H4.5L2 10.5V7H0Z" fill="#b0b3b6"/></svg>
<svg class="a" style="left:5px;top:188px;" width="10" height="9.5" viewBox="0 0 10 9.5"><rect x="0" y="0" width="4" height="4" fill="#b0b3b6"/><rect x="6" y="0" width="4" height="4" fill="#b0b3b6"/><rect x="0" y="5.5" width="4" height="4" fill="#b0b3b6"/><rect x="6" y="5.5" width="4" height="4" fill="#b0b3b6"/></svg>
<svg class="a" style="left:4.5px;top:208.5px;" width="11.5" height="10" viewBox="0 0 11.5 10"><rect x="0.5" y="0.5" width="10.5" height="9" fill="none" stroke="#b0b3b6" stroke-width="1"/><path d="M0.5 3H11" stroke="#b0b3b6" stroke-width="1.4"/><rect x="2" y="4.5" width="3" height="1.5" fill="#b0b3b6"/><rect x="6.5" y="4.5" width="3" height="1.5" fill="#b0b3b6"/><rect x="2" y="7" width="3" height="1.5" fill="#b0b3b6"/><rect x="6.5" y="7" width="3" height="1.5" fill="#b0b3b6"/></svg>
<svg class="a" style="left:4.5px;top:230.5px;" width="11" height="10.5" viewBox="0 0 11 10.5"><circle cx="5.5" cy="1.8" r="1.6" fill="#fff"/><circle cx="1.8" cy="3" r="1.3" fill="#fff"/><circle cx="9.2" cy="3" r="1.3" fill="#fff"/><path d="M3.5 4.5H7.5L8 10.5H3Z M0 5H3L3.2 9H0.3Z M8 5H11L10.7 9H7.8Z" fill="#fff"/></svg>
<svg class="a" style="left:3.5px;top:313px;" width="12.5" height="10.5" viewBox="0 0 12.5 10.5"><ellipse cx="6.25" cy="4.3" rx="6" ry="4.2" fill="#b0b3b6"/><path d="M3 7.3L1.5 10.5L6 8.2Z" fill="#b0b3b6"/><circle cx="3.5" cy="4.3" r="0.9" fill="#1d2327"/><circle cx="6.25" cy="4.3" r="0.9" fill="#1d2327"/><circle cx="9" cy="4.3" r="0.9" fill="#1d2327"/></svg>
<svg class="a" style="left:5px;top:335.5px;" width="10" height="11" viewBox="0 0 10 11"><circle cx="5" cy="2.3" r="2.2" fill="#b0b3b6"/><path d="M0 11V7.8Q0 5.5 2.5 5.5H7.5Q10 5.5 10 7.8V11Z" fill="#b0b3b6"/><circle cx="5" cy="8" r="1" fill="#1d2327"/></svg>
<svg class="a" style="left:4.5px;top:358.5px;" width="11.5" height="8.5" viewBox="0 0 11.5 8.5"><rect x="0" y="0" width="11.5" height="8.5" fill="#b0b3b6"/><path d="M0.8 0.8L5.75 4.6L10.7 0.8" fill="none" stroke="#1d2327" stroke-width="1.1"/></svg>
<svg class="a" style="left:4px;top:386px;" width="12" height="10.5" viewBox="0 0 12 10.5"><path d="M6.5 0.5L11.5 4.5L9 7.5L4.5 3.5Z" fill="#b0b3b6"/><path d="M5 5.5L7 7.2L2 10.3L0.8 9.2Z" fill="#b0b3b6"/></svg>
<svg class="a" style="left:5px;top:407px;" width="10" height="11" viewBox="0 0 10 11"><path d="M5.5 2.5L8 0L9 1L6.5 3.5Z M7.2 4.2L9.7 1.7L10 3L7.8 5Z" fill="#b0b3b6"/><path d="M3.5 3L8 7.5L6 9.5Q4 10 2.8 8.8L0.5 11L0 10.5L2.2 8.2Q1 7 1.5 5Z" fill="#b0b3b6"/></svg>
<svg class="a" style="left:5px;top:429px;" width="10" height="11" viewBox="0 0 10 11"><circle cx="5" cy="2.5" r="2.4" fill="#b0b3b6"/><path d="M0 11V8Q0 5.6 2.5 5.6H7.5Q10 5.6 10 8V11Z" fill="#b0b3b6"/></svg>
<svg class="a" style="left:4.5px;top:450px;" width="11" height="11" viewBox="0 0 11 11"><path d="M10.5 2.2L8.6 4L7 3.5L6.5 1.9L8.3 0.1Q5.6 -0.5 4.8 2Q4.5 3.2 4.9 4.2L0.4 8.7Q-0.3 9.8 0.6 10.5Q1.4 11.2 2.3 10.5L6.8 6Q7.8 6.4 9 6.1Q11.3 5.2 10.5 2.2Z" fill="#b0b3b6"/></svg>
<svg class="a" style="left:3.5px;top:473.5px;" width="13" height="10.5" viewBox="0 0 13 10.5"><path d="M3 10.5Q0 10.5 0 7.3Q0 4.5 2.8 4.3Q3.3 0.6 7 1Q9 0 10.5 2.3Q13 2.8 13 6Q13 10.5 9.5 10.5Z" fill="#b0b3b6"/></svg>
<svg class="a" style="left:5px;top:505px;" width="10.5" height="10" viewBox="0 0 10.5 10"><rect x="0" y="0" width="10.5" height="10" fill="#b0b3b6"/><path d="M3.3 1.5V8.5M7.2 1.5V8.5" stroke="#1d2327" stroke-width="1"/><rect x="2.2" y="5" width="2.2" height="1.8" fill="#1d2327"/><rect x="6.1" y="2.8" width="2.2" height="1.8" fill="#1d2327"/></svg>
<svg class="a" style="left:3.5px;top:532px;" width="13" height="13" viewBox="0 0 13 13"><circle cx="6.5" cy="6.5" r="6.2" fill="#b0b3b6"/><path d="M3 9L5 5.5L6.5 7.5L8 4.5L10 9Z" fill="#1d2327"/></svg>
<svg class="a" style="left:4px;top:555.5px;" width="12" height="9" viewBox="0 0 12 9"><path d="M0.5 4.5Q6 -2 11.5 4.5Q6 11 0.5 4.5Z" fill="none" stroke="#b0b3b6" stroke-width="1.6"/><circle cx="6" cy="4.5" r="2.2" fill="#b0b3b6"/><circle cx="6" cy="4.5" r="1" fill="#1d2327"/></svg>
<svg class="a" style="left:5px;top:576px;" width="10" height="12" viewBox="0 0 10 12"><path d="M8.5 0Q10.5 3 9.5 7Q8.5 11 5 11.8Q1.5 12 0.5 9Q-0.2 6.5 1.8 5Q1.2 7.5 3 8.8Q6 6 8.5 0Z" fill="#b0b3b6"/></svg>
<svg class="a" style="left:4.5px;top:598px;" width="11" height="11" viewBox="0 0 11 11"><circle cx="5.5" cy="5.5" r="5.3" fill="#b0b3b6"/><path d="M7 3L3.5 5.5L7 8Z" fill="#1d2327"/></svg>
<div class="a" style="left:67px;top:166px;width:14.50px;height:12.00px;background:#d63638;border-radius:6px;"></div>
<div class="t" id="t116" style="left:70.41px;top:168.79px;font-size:8.4px;color:#fff;transform:scaleX(0.8778);">46</div>
<div class="a" style="left:53.2px;top:406.9px;width:12.00px;height:12.00px;background:#d63638;border-radius:6px;"></div>
<div class="t" id="t117" style="left:57.39px;top:409.79px;font-size:8.4px;color:#fff;transform:scaleX(0.8000);">2</div>
</body></html>
